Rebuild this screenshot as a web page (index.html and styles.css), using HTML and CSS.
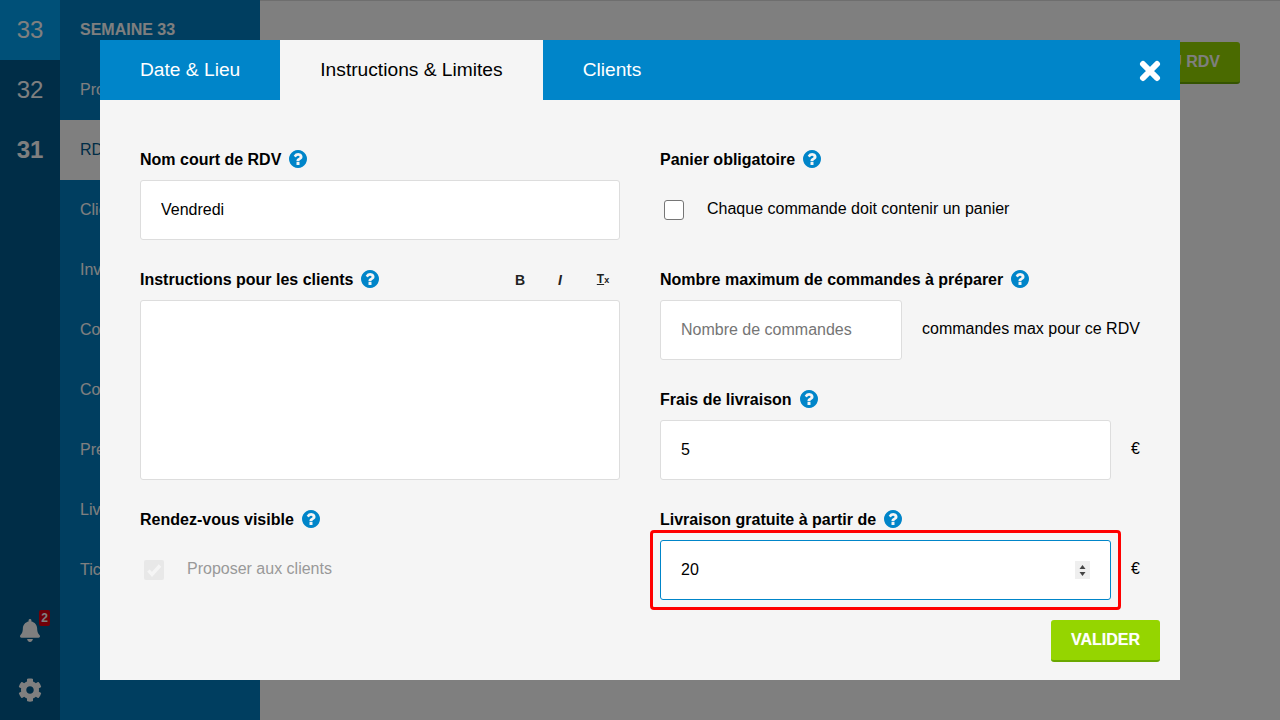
FILE: index.html
```html
<!DOCTYPE html>
<html lang="fr">
<head>
<meta charset="utf-8">
<title>RDV</title>
<link rel="stylesheet" href="styles.css">
</head>
<body>
<svg class="defs" width="0" height="0" aria-hidden="true">
  <symbol id="help" viewBox="128 128 1536 1536"><path d="M1024 1376v-192q0-14-9-23t-23-9h-192q-14 0-23 9t-9 23v192q0 14 9 23t23 9h192q14 0 23-9t9-23zm256-672q0-88-55.5-163t-138.5-116-170-41q-243 0-371 213-15 24 8 42l132 100q7 6 19 6 16 0 25-12 53-68 86-92 34-24 86-24 48 0 85.5 26t37.5 59q0 38-20 61t-68 45q-63 28-115.5 86.5t-52.5 125.5v36q0 14 9 23t23 9h192q14 0 23-9t9-23q0-19 21.5-49.5t54.5-49.5q32-18 49-28.5t46-35 44.5-48 28-60.5 12.5-81zm384 192q0 209-103 385.5t-279.5 279.5-385.5 103-385.5-103-279.5-279.5-103-385.5 103-385.5 279.5-279.5 385.5-103 385.5 103 279.5 279.5 103 385.5z"/></symbol>
</svg>
<div class="app">
  <nav class="weeks">
    <div class="week week-current">33</div>
    <div class="week">32</div>
    <div class="week week-bold">31</div>
    <div class="week-tools">
      <div class="tool bell">
        <svg class="bell-icon" viewBox="0 0 448 512"><path d="M224 512c35.32 0 63.97-28.65 63.97-64H160.03c0 35.35 28.65 64 63.97 64zm215.39-149.71c-19.32-20.76-55.47-51.99-55.47-154.29 0-77.7-54.48-139.9-127.94-155.16V32c0-17.67-14.32-32-31.98-32s-31.98 14.33-31.98 32v20.84C118.56 68.1 64.08 130.3 64.08 208c0 102.3-36.15 133.53-55.47 154.29-6 6.45-8.66 14.16-8.61 21.71.11 16.4 12.98 32 32.1 32h383.8c19.12 0 32-15.6 32.1-32 .05-7.55-2.61-15.27-8.61-21.71z"/></svg>
        <span class="badge">2</span>
      </div>
      <div class="tool">
        <svg class="cog-icon" viewBox="0 0 512 512"><path d="M487.4 315.7l-42.6-24.6c4.3-23.2 4.3-47 0-70.2l42.6-24.6c4.9-2.8 7.1-8.6 5.5-14-11.1-35.6-30-67.8-54.7-94.6-3.8-4.1-10-5.1-14.8-2.3L380.8 110c-17.9-15.4-38.5-27.3-60.8-35.1V25.8c0-5.6-3.9-10.5-9.4-11.7-36.7-8.2-74.3-7.8-109.2 0-5.5 1.2-9.4 6.1-9.4 11.7V75c-22.2 7.9-42.8 19.8-60.8 35.1L88.7 85.5c-4.9-2.8-11-1.9-14.8 2.3-24.7 26.7-43.6 58.9-54.7 94.6-1.7 5.4.6 11.2 5.5 14L67.3 221c-4.3 23.2-4.3 47 0 70.2l-42.6 24.6c-4.9 2.8-7.1 8.6-5.5 14 11.1 35.6 30 67.8 54.7 94.6 3.8 4.1 10 5.1 14.8 2.3l42.6-24.6c17.9 15.4 38.5 27.3 60.8 35.1v49.2c0 5.6 3.9 10.5 9.4 11.7 36.7 8.2 74.3 7.8 109.2 0 5.5-1.2 9.4-6.1 9.4-11.7v-49.2c22.2-7.9 42.8-19.8 60.8-35.1l42.6 24.6c4.9 2.8 11 1.9 14.8-2.3 24.7-26.7 43.6-58.9 54.7-94.6 1.5-5.5-.7-11.3-5.6-14.1zM256 336c-44.1 0-80-35.9-80-80s35.9-80 80-80 80 35.9 80 80-35.9 80-80 80z"/></svg>
      </div>
    </div>
  </nav>
  <nav class="menu">
    <div class="menu-title">SEMAINE 33</div>
    <div class="menu-item">Produits</div>
    <div class="menu-item menu-item-active">RDV</div>
    <div class="menu-item">Clients</div>
    <div class="menu-item">Invitations</div>
    <div class="menu-item">Commandes</div>
    <div class="menu-item">Comptes</div>
    <div class="menu-item">Préparation</div>
    <div class="menu-item">Livraison</div>
    <div class="menu-item">Tickets</div>
  </nav>
  <main class="content">
    <button class="btn-new" type="button">NOUVEAU RDV</button>
  </main>
</div>

<div class="overlay">
  <section class="modal">
    <header class="tabs">
      <div class="tab">Date &amp; Lieu</div>
      <div class="tab tab-active">Instructions &amp; Limites</div>
      <div class="tab">Clients</div>
      <button class="close" type="button" aria-label="Fermer">
        <svg viewBox="0 0 22 22" width="22" height="22"><path d="M4 4 18 18M18 4 4 18"/></svg>
      </button>
    </header>
    <div class="modal-body">
      <div class="columns">
        <div class="col">
          <div class="field">
            <div class="label-row"><span class="label">Nom court de RDV</span><svg class="help"><use href="#help"/></svg></div>
            <input class="input" type="text" value="Vendredi">
          </div>
          <div class="field">
            <div class="label-row">
              <span class="label">Instructions pour les clients</span><svg class="help"><use href="#help"/></svg>
              <div class="toolbar">
                <span class="tb tb-b">B</span>
                <span class="tb tb-i">I</span>
                <span class="tb tb-clear"><span class="tb-t">T</span><span class="tb-x">x</span></span>
              </div>
            </div>
            <div class="editor"></div>
          </div>
          <div class="field">
            <div class="label-row"><span class="label">Rendez-vous visible</span><svg class="help"><use href="#help"/></svg></div>
            <div class="check-row check-row-disabled">
              <span class="box box-disabled"><svg viewBox="0 0 20 20" width="20" height="20"><path d="M4.5 10.5 8 14.5 16 5.5"/></svg></span>
              <span>Proposer aux clients</span>
            </div>
          </div>
        </div>
        <div class="col">
          <div class="field">
            <div class="label-row"><span class="label">Panier obligatoire</span><svg class="help"><use href="#help"/></svg></div>
            <div class="check-row">
              <span class="box"></span>
              <span>Chaque commande doit contenir un panier</span>
            </div>
          </div>
          <div class="field field-tight">
            <div class="label-row"><span class="label">Nombre maximum de commandes à préparer</span><svg class="help"><use href="#help"/></svg></div>
            <div class="input-row">
              <input class="input input-short" type="text" placeholder="Nombre de commandes">
              <span class="suffix">commandes max pour ce RDV</span>
            </div>
          </div>
          <div class="field">
            <div class="label-row"><span class="label">Frais de livraison</span><svg class="help"><use href="#help"/></svg></div>
            <div class="input-row">
              <input class="input" type="text" value="5">
              <span class="suffix">€</span>
            </div>
          </div>
          <div class="field">
            <div class="label-row"><span class="label">Livraison gratuite à partir de</span><svg class="help"><use href="#help"/></svg></div>
            <div class="input-row">
              <div class="highlight-wrap">
                <input class="input input-focus" type="number" value="20">
                <span class="highlight"></span>
              </div>
              <span class="suffix">€</span>
            </div>
          </div>
        </div>
      </div>
      <div class="actions">
        <button class="btn-submit" type="button">VALIDER</button>
      </div>
    </div>
  </section>
</div>
</body>
</html>
```
FILE: styles.css
```css
* { box-sizing: border-box; }
html, body { margin: 0; height: 100%; overflow: hidden; }
body { font-family: "Liberation Sans", Arial, sans-serif; font-size: 16px; line-height: 1.5; color: #000; background: #fff; position: relative; zoom: 1; }
.defs { position: absolute; }

.app { display: flex; height: 720px; }
.weeks { width: 60px; background: #005a8e; display: flex; flex-direction: column; color: #fff; }
.week { height: 60px; display: flex; align-items: center; justify-content: center; font-size: 24px; }
.week-current { background: #00a0f0; }
.week-bold { font-weight: 700; }
.week-tools { margin-top: auto; display: flex; flex-direction: column; }
.tool { height: 60px; display: flex; align-items: center; justify-content: center; position: relative; }
.bell-icon { width: 20px; height: 23px; fill: #fff; }
.cog-icon { width: 24px; height: 24px; fill: #fff; }
.badge { position: absolute; left: 39px; top: 10px; width: 11px; height: 16px; border-radius: 2px; background: #e00010; color: #fff; font-size: 12px; font-weight: 700; line-height: 16px; text-align: center; }

.menu { width: 200px; background: #007dc1; color: #fff; }
.menu-title, .menu-item { height: 60px; display: flex; align-items: center; padding-left: 20px; }
.menu-title { font-weight: 700; }
.menu-item-active { background: #fff; color: #005a8e; }

.content { flex: 1; background: #fff; border-top: 1px solid #ddd; display: flex; justify-content: flex-end; align-items: flex-start; padding: 41px 40px 0 0; }
.btn-new { height: 42px; padding: 0 20px; border: 0; border-bottom: 2px solid #6aa800; border-radius: 3px; background: #95d500; color: #fff; font: 700 16px/24px "Liberation Sans", Arial, sans-serif; }

.overlay { position: absolute; inset: 0; background: rgba(0, 0, 0, .5); display: flex; align-items: center; justify-content: center; }
.modal { width: 1080px; height: 640px; background: #f5f5f5; display: flex; flex-direction: column; }
.tabs { height: 60px; background: #0085c9; display: flex; position: relative; color: #fff; }
.tab { height: 60px; padding: 0 40px; display: flex; align-items: center; font-size: 19.2px; }
.tab-active { background: #f5f5f5; color: #000; }
.close { position: absolute; right: 19px; top: 20px; width: 22px; height: 22px; padding: 0; border: 0; background: none; display: block; }
.close svg { display: block; }
.close path { fill: none; stroke: #fff; stroke-width: 6; stroke-linecap: round; }

.modal-body { flex: 1; display: flex; flex-direction: column; padding-top: 40px; }
.columns { display: flex; gap: 40px; padding: 0 40px; }
.col { width: 480px; display: flex; flex-direction: column; gap: 20px; }
.field { display: flex; flex-direction: column; }
.label-row { height: 40px; display: flex; align-items: center; }
.label { font-weight: 700; }
.help { width: 18px; height: 18px; margin-left: 8px; margin-top: -2px; fill: #0085c9; flex: none; }

.input { display: block; width: 100%; height: 60px; padding: 0 20px; border: 1px solid #ddd; border-radius: 3px; background: #fff; color: #000; font: 16px/24px "Liberation Sans", Arial, sans-serif; outline: 0; }
.input::placeholder { color: #757575; opacity: 1; }
.input-focus { border-color: #0085c9; }
.input-focus::-webkit-inner-spin-button {
  -webkit-appearance: none;
  appearance: none;
  display: block;
  align-self: center;
  opacity: 1;
  width: 15px;
  height: 18px;
  background: #efefef url("data:image/svg+xml,%3Csvg xmlns='http://www.w3.org/2000/svg' width='15' height='18'%3E%3Cpath fill='%23444' d='M7.5 4 10.5 8H4.5zM4.5 11h6l-3 4z'/%3E%3C/svg%3E") no-repeat center;
}
.input-short { width: 242px; flex: none; }
.editor { height: 180px; border: 1px solid #ddd; border-radius: 3px; background: #fff; }

.toolbar { margin-left: auto; display: flex; }
.tb { width: 40px; display: flex; justify-content: center; align-items: center; color: #222; font-size: 14px; font-weight: 700; }
.tb-i { font-style: italic; }
.tb-clear { align-items: baseline; padding-left: 6px; }
.tb-t { font-size: 12px; text-decoration: underline; }
.tb-x { font-size: 9px; }

.check-row { height: 60px; display: flex; align-items: center; gap: 23px; padding-left: 4px; padding-bottom: 2px; }
.check-row-disabled { color: #999; }
.box { width: 20px; height: 20px; margin-top: 2px; border: 1px solid #767676; border-radius: 3px; background: #fff; flex: none; }
.box-disabled { border: 0; border-radius: 2px; background: #e8e8e8; }
.box-disabled svg { display: block; }
.box-disabled path { fill: none; stroke: #f5f5f5; stroke-width: 3.4; }

.input-row { display: flex; align-items: center; gap: 20px; }
.suffix { flex: none; padding-bottom: 2px; }
.highlight-wrap { position: relative; flex: 1; }
.highlight { position: absolute; inset: -10px; border: 3px solid #f00; border-radius: 4px; pointer-events: none; }

.actions { display: flex; justify-content: flex-end; padding: 20px 20px 0 0; }
.btn-submit { height: 42px; padding: 0 20px; border: 0; border-bottom: 2px solid #6aa800; border-radius: 3px; background: #95d500; color: #fff; font: 700 16px/24px "Liberation Sans", Arial, sans-serif; text-shadow: 0 0 1px rgba(255, 255, 255, .4); }
```
